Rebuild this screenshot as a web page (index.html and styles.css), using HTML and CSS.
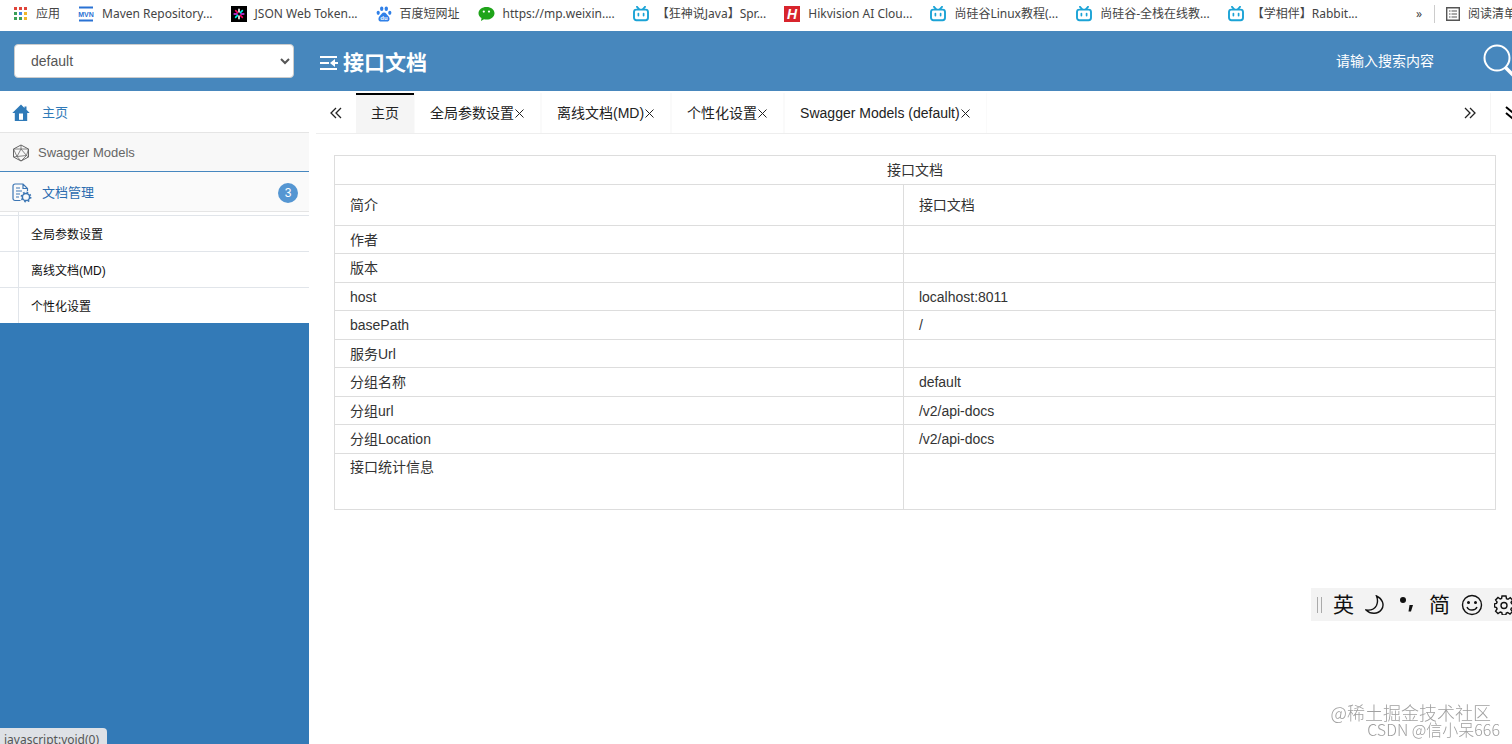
FILE: index.html
```html
<!DOCTYPE html>
<html lang="zh-CN">
<head>
    <meta charset="UTF-8">
    <meta name="viewport" content="width=device-width, initial-scale=1.0">
    <title>接口文档</title>
    <link rel="stylesheet" href="styles.css">
</head>
<body>
    <!-- 图标 -->
    <svg class="defs" width="0" height="0">
        <symbol id="tv" viewBox="0 0 16 16">
            <path d="M4 .8l2 2.4M12 .8l-2 2.4" fill="none" stroke="#1ba3d6" stroke-width="1.8" stroke-linecap="round"/>
            <rect x="1" y="3.6" width="14" height="10.6" rx="2.4" fill="#fff" stroke="#1ba3d6" stroke-width="1.9"/>
            <path d="M5.4 7.6v2M10.6 7.6v2" stroke="#1ba3d6" stroke-width="1.7" stroke-linecap="round"/>
        </symbol>
    </svg>

    <!-- 书签栏 -->
    <nav class="bookmarks">
        <a href="#">
            <svg width="15" height="16" viewBox="0 0 15 16">
                <path d="M1 1h3v3H1zM6 1h3v3H6zM11 1h3v3h-3z" fill="#e0443a"/>
                <path d="M1 6h3v3H1z" fill="#3a9f57"/>
                <path d="M6 6h3v3H6z" fill="#3f82ea"/>
                <path d="M11 6h3v3h-3z" fill="#f0b52b"/>
                <path d="M1 11h3v3H1zM6 11h3v3H6z" fill="#3a9f57"/>
                <path d="M11 11h3v3h-3z" fill="#f0b52b"/>
            </svg>
            <span>应用</span>
        </a>
        <a href="#">
            <svg width="16" height="16" viewBox="0 0 16 16">
                <path d="M1 1.5h14M1 14.5h14" stroke="#2a72d4" stroke-width="1.8"/>
                <text class="logo-mvn" x="8" y="11" text-anchor="middle">MVN</text>
            </svg>
            <span>Maven Repository...</span>
        </a>
        <a href="#">
            <svg width="16" height="16" viewBox="0 0 16 16" stroke-width="1.6" stroke-linecap="round">
                <path d="M0 0h16v16H0z" fill="#000"/>
                <path d="M8 6V3.200M8 10v2.800" stroke="#fff"/>
                <path d="M10 8h2.800M6 8H3.200" stroke="#d63aff"/>
                <path d="M9.400 6.600l2-2M6.600 9.400l-2 2" stroke="#00f2e6"/>
                <path d="M6.600 6.600l-2-2M9.400 9.400l2 2" stroke="#fb015b"/>
            </svg>
            <span>JSON Web Token...</span>
        </a>
        <a href="#">
            <svg width="16" height="16" viewBox="0 0 16 16" fill="#3080e8">
                <ellipse cx="5.700" cy="2.700" rx="1.700" ry="2.300"/>
                <ellipse cx="10.300" cy="2.700" rx="1.700" ry="2.300"/>
                <ellipse cx="2.200" cy="6.800" rx="1.600" ry="2.100"/>
                <ellipse cx="13.800" cy="6.800" rx="1.600" ry="2.100"/>
                <path d="M8 6.400c2.200 0 2.500 2 4.200 3.500 2.200 1.900 1.600 5.700-1.200 5.700H5c-2.800 0-3.400-3.800-1.200-5.700C5.500 8.400 5.800 6.400 8 6.400z"/>
                <text class="logo-du" x="8" y="14" text-anchor="middle">du</text>
            </svg>
            <span>百度短网址</span>
        </a>
        <a href="#">
            <svg width="17" height="16" viewBox="0 0 17 16">
                <path d="M8.500 1C4 1 .5 3.700.5 7.200c0 2 1.200 3.700 3 4.900L3 15l3-1.700c.8.200 1.600.3 2.500.3 4.500 0 8-2.800 8-6.400S13 1 8.500 1z" fill="#1fa41a"/>
                <circle cx="5.800" cy="5.600" r="1.100" fill="#fff"/>
                <circle cx="11" cy="5.600" r="1.100" fill="#fff"/>
            </svg>
            <span>https://mp.weixin....</span>
        </a>
        <a href="#">
            <svg width="16" height="16"><use href="#tv"/></svg>
            <span>【狂神说Java】Spr...</span>
        </a>
        <a href="#">
            <svg width="16" height="16" viewBox="0 0 16 16">
                <path d="M0 0h16v16H0z" fill="#d8242c"/>
                <text class="logo-h" x="8" y="13" text-anchor="middle">H</text>
            </svg>
            <span>Hikvision AI Clou...</span>
        </a>
        <a href="#">
            <svg width="16" height="16"><use href="#tv"/></svg>
            <span>尚硅谷Linux教程(...</span>
        </a>
        <a href="#">
            <svg width="16" height="16"><use href="#tv"/></svg>
            <span>尚硅谷-全栈在线教...</span>
        </a>
        <a href="#">
            <svg width="16" height="16"><use href="#tv"/></svg>
            <span>【学相伴】Rabbit...</span>
        </a>
        <div class="bookmarks-end">
            <button type="button" class="more">»</button>
            <a href="#" class="reading">
                <svg width="14" height="14" viewBox="0 0 14 14" fill="none" stroke="#555">
                    <path d="M.7.7h12.600v12.600H.7z" stroke-width="1.400"/>
                    <path d="M3 4h1.500M3 7h1.500M3 10h1.500M5.500 4H11M5.500 7H11M5.500 10H11" stroke-width="1.200"/>
                </svg>
                <span>阅读清单</span>
            </a>
        </div>
    </nav>

    <!-- 头部 -->
    <header class="header">
        <div class="group">
            <select class="group-select" aria-label="分组">
                <option>default</option>
            </select>
        </div>
        <h1 class="title">
            <svg width="18" height="16" viewBox="0 0 18 16" fill="none" stroke="#fff" stroke-width="2">
                <path d="M0 2h17M0 8h9M0 14h17"/>
                <path d="M10 8l5-4v8z" fill="#fff" stroke="none"/>
                <path d="M14 8h4"/>
            </svg>
            接口文档
        </h1>
        <form class="search">
            <input type="text" placeholder="请输入搜索内容" aria-label="请输入搜索内容">
            <button type="button" aria-label="搜索">
                <svg width="29" height="34" viewBox="0 0 29 34" fill="none" stroke="#fff">
                    <circle cx="14" cy="14" r="12.500" stroke-width="2"/>
                    <path d="M22 23l10 10" stroke-width="3.500"/>
                </svg>
            </button>
        </form>
    </header>

    <div class="container">
        <!-- 左侧菜单 -->
        <aside class="sidebar">
            <ul class="menu">
                <li class="home">
                    <a href="#">
                        <svg width="18" height="18" viewBox="0 0 18 18" fill="#2f7ab8">
                            <path d="M9 .5L.3 9h2.500v8h12.400V9h2.500L14.500 5.800V2.500h-2v1.400z"/>
                            <path d="M7 9.500h4v6.300H7z" fill="#fff"/>
                        </svg>
                        <span>主页</span>
                    </a>
                </li>
                <li class="models">
                    <a href="#">
                        <svg width="18" height="18" viewBox="0 0 18 18" fill="none" stroke="#666">
                            <path d="M9 1l7.500 4v8L9 17l-7.500-4V5z"/>
                            <path d="M9 1v4L1.500 5 5 12.500l-3.500.5M9 5l7.500 0-2 6.500 2 1.500M9 17l-4-4.500 9.500-1L9 17M9 5l-4 7.500M9 5l5.500 6.500" stroke-width=".8"/>
                        </svg>
                        <span>Swagger Models</span>
                    </a>
                </li>
                <li class="docs">
                    <a href="#">
                        <svg width="20" height="20" viewBox="0 0 20 20" fill="none" stroke="#3c76b4" stroke-width="1.200">
                            <path d="M8.500 17.500H3a2 2 0 0 1-2-2V3a2 2 0 0 1 2-2h8l4.500 4.500V8M11 1v4.500h4.500"/>
                            <path d="M4 5h4M4 8h6M4 11h4M4 14h3"/>
                            <circle cx="14" cy="14" r="3.600" stroke-width="1.500"/>
                            <circle cx="14" cy="14" r="4.700" stroke-width="1.500" stroke-dasharray="1.700 1.990"/>
                        </svg>
                        <span>文档管理</span>
                        <span class="badge">3</span>
                    </a>
                    <ul class="submenu">
                        <li><a href="#">全局参数设置</a></li>
                        <li><a href="#">离线文档(MD)</a></li>
                        <li><a href="#">个性化设置</a></li>
                    </ul>
                </li>
            </ul>
        </aside>

        <main class="content">
            <!-- 选项卡 -->
            <div class="tabs">
                <button type="button" class="roll" aria-label="向左">
                    <svg width="12" height="12" viewBox="0 0 12 12"><path d="M6 1L1 6l5 5M11 1L6 6l5 5"/></svg>
                </button>
                <ul class="tab-list">
                    <li class="active"><a href="#">主页</a></li>
                    <li><a href="#">全局参数设置</a><button type="button" aria-label="关闭"><svg width="9" height="9" viewBox="0 0 9 9"><path d="M.5.5l8 8M8.500.5l-8 8"/></svg></button></li>
                    <li><a href="#">离线文档(MD)</a><button type="button" aria-label="关闭"><svg width="9" height="9" viewBox="0 0 9 9"><path d="M.5.5l8 8M8.500.5l-8 8"/></svg></button></li>
                    <li><a href="#">个性化设置</a><button type="button" aria-label="关闭"><svg width="9" height="9" viewBox="0 0 9 9"><path d="M.5.5l8 8M8.500.5l-8 8"/></svg></button></li>
                    <li><a href="#">Swagger Models (default)</a><button type="button" aria-label="关闭"><svg width="9" height="9" viewBox="0 0 9 9"><path d="M.5.5l8 8M8.500.5l-8 8"/></svg></button></li>
                </ul>
                <button type="button" class="roll" aria-label="向右">
                    <svg width="12" height="12" viewBox="0 0 12 12"><path d="M1 1l5 5-5 5M6 1l5 5-5 5"/></svg>
                </button>
                <button type="button" class="drop" aria-label="更多">
                    <svg width="8" height="14" viewBox="0 0 8 14"><path d="M1 1l6 5 6-5M1 7l6 5 6-5"/></svg>
                </button>
            </div>

            <table class="info">
                <colgroup>
                    <col class="key">
                    <col>
                </colgroup>
                <thead>
                    <tr><th colspan="2">接口文档</th></tr>
                </thead>
                <tbody>
                    <tr class="intro"><td>简介</td><td>接口文档</td></tr>
                    <tr><td>作者</td><td></td></tr>
                    <tr><td>版本</td><td></td></tr>
                    <tr><td>host</td><td>localhost:8011</td></tr>
                    <tr><td>basePath</td><td>/</td></tr>
                    <tr><td>服务Url</td><td></td></tr>
                    <tr><td>分组名称</td><td>default</td></tr>
                    <tr><td>分组url</td><td>/v2/api-docs</td></tr>
                    <tr><td>分组Location</td><td>/v2/api-docs</td></tr>
                    <tr class="count"><td>接口统计信息</td><td></td></tr>
                </tbody>
            </table>
        </main>
    </div>

    <!-- 输入法 -->
    <div class="ime">
        <i class="grip"></i>
        <span>英</span>
        <svg width="20" height="20" viewBox="0 0 20 20"><path d="M11.500 1c5.500 2.500 8.500 8.500 5 13.500-3.500 5-11 5-15.500.5 4.500.5 8.500-.5 10.500-4.500 1.500-3.300 1.200-6.500 0-9.500z"/></svg>
        <svg width="22" height="20" viewBox="0 0 22 20"><circle cx="7" cy="5" r="2.300" fill="#111"/><path d="M13.500 10h3.500l-2 6.500h-2.500z" fill="#111" stroke="none"/></svg>
        <span>简</span>
        <svg width="22" height="22" viewBox="0 0 22 22"><circle cx="11" cy="11" r="9.500"/><path d="M6 13c1.500 4 8.500 4 10 0"/><circle cx="7.500" cy="8.500" r=".8" fill="#111"/><circle cx="14.500" cy="8.500" r=".8" fill="#111"/></svg>
        <svg width="20" height="20" viewBox="0 0 20 20"><path d="M8 1h4l.5 2.700 1.500.6 2.300-1.600 2.300 2.300L17 7.400l.6 1.300L20 9v3.500l-2.600.5-.6 1.400 1.600 2.300-2.400 2.300-2.300-1.500-1.400.6L11.800 20H8.300l-.5-2.400-1.500-.6L4 18.600l-2.400-2.400 1.500-2.200-.6-1.400L.5 12V8.800l2-.4.600-1.400L1.600 4.900 4 2.500l2.200 1.500 1.400-.6z"/><circle cx="10" cy="10.500" r="3"/></svg>
    </div>

    <div class="watermark">
        <p class="juejin">@稀土掘金技术社区</p>
        <p class="csdn">CSDN @信小呆666</p>
    </div>

    <div class="status">javascript:void(0)</div>
</body>
</html>
```
FILE: styles.css
```css
* {
	box-sizing: border-box;
}

body {
	margin: 0;
	height: 100vh;
	display: flex;
	flex-direction: column;
	overflow: hidden;
	font: 14px/20px "Liberation Sans", "Noto Sans CJK SC", sans-serif;
	color: #333;
	background-color: #fff;
}

ul, h1, p {
	margin: 0;
	padding: 0;
	list-style: none;
}

a {
	color: inherit;
	text-decoration: none;
}

button {
	padding: 0;
	border: 0;
	background: none;
	color: inherit;
	font: inherit;
}

svg {
	flex: none;
	display: block;
}

.defs {
	position: absolute;
}

/* 书签栏 */
.bookmarks {
	flex: none;
	display: flex;
	align-items: center;
	gap: 18px;
	height: 31px;
	padding: 0 0 4px 13px;
	font: 12px/18px "Noto Sans", "Noto Sans CJK SC", sans-serif;
	color: #444;
	white-space: nowrap;
}

.bookmarks a {
	flex: none;
	display: flex;
	align-items: center;
	gap: 8px;
}

.logo-mvn {
	font: bold 7px "Liberation Sans", sans-serif;
	fill: #2a72d4;
}

.logo-du {
	font: bold 6px "Liberation Sans", sans-serif;
	fill: #fff;
}

.logo-h {
	font: italic bold 14px "Liberation Sans", sans-serif;
	fill: #fff;
}

.bookmarks-end {
	display: flex;
	align-items: center;
	gap: 12px;
	width: 96px;
	margin-left: auto;
}

.reading {
	padding-left: 11px;
	border-left: 1px solid #ccc;
}

/* 头部 */
.header {
	flex: none;
	display: flex;
	align-items: center;
	height: 60px;
	background-color: #4787bd;
	color: #fff;
}

.group {
	width: 309px;
	padding: 0 15px 0 14px;
}

.group-select {
	width: 100%;
	height: 34px;
	padding: 0 4px 0 12px;
	border: 1px solid #ccc;
	border-radius: 4px;
	background-color: #fff;
	color: #555;
	font: inherit;
}

.title {
	display: flex;
	align-items: center;
	gap: 5px;
	margin-left: 11px;
	padding-top: 3px;
	font-size: 21px;
	line-height: 30px;
}

.search {
	display: flex;
	align-items: center;
	margin-left: auto;
}

.search input {
	width: 147px;
	padding: 0;
	border: 0;
	outline: 0;
	background: none;
	color: #fff;
	font: inherit;
}

.search input::placeholder {
	color: #fff;
}

.container {
	flex: 1;
	display: flex;
	min-height: 0;
}

/* 左侧菜单 */
.sidebar {
	flex: none;
	width: 309px;
	background-color: #337ab7;
}

.menu {
	background-color: #fff;
	font-size: 13px;
}

.menu > li > a {
	display: flex;
	align-items: center;
	height: 41px;
	padding: 2px 11px 0 12px;
	gap: 12px;
}

.home {
	border-bottom: 1px solid #e5e5e5;
	color: #2f7ab8;
}

.menu .models > a {
	height: 38px;
	gap: 8px;
	background-color: #f8f8f8;
	color: #666;
}

.menu .docs > a {
	gap: 10px;
	border-top: 1px solid #4687bf;
	border-bottom: 1px solid #e5e5e5;
	background-color: #fafafa;
	color: #2b6cb0;
}

.badge {
	width: 20px;
	height: 20px;
	margin-left: auto;
	border-radius: 50%;
	background-color: #5596d2;
	color: #fff;
	font-size: 12px;
	text-align: center;
}

.submenu {
	padding-top: 3px;
	background: linear-gradient(#e1e5ea, #e1e5ea) 18px 0 / 1px 100% no-repeat;
	font-size: 12px;
	color: #111;
}

.submenu li {
	height: 36px;
	padding: 9px 0 0 31px;
	border-top: 1px solid #e1e5ea;
}

/* 选项卡 */
.content {
	flex: 1;
	min-width: 0;
	padding-left: 7px;
}

.tabs {
	display: flex;
	height: 43px;
	padding-top: 2px;
	border-bottom: 1px solid #eee;
	color: #222;
}

.tabs svg {
	fill: none;
	stroke: #222;
}

.roll {
	display: flex;
	align-items: center;
	justify-content: center;
	width: 40px;
}

.roll svg {
	stroke-width: 1.3;
}

.tab-list {
	flex: 1;
	display: flex;
}

.tab-list li {
	display: flex;
	align-items: center;
	padding: 0 15px;
	border: 1px solid #fafafa;
	border-width: 0 1px;
}

.tab-list button {
	padding: 0 1px;
}

.tab-list .active {
	padding-bottom: 2px;
	border-width: 2px 0 0;
	border-color: #000;
	background-color: #f5f5f5;
}

.drop {
	width: 22px;
	padding-left: 14px;
	border-left: 1px solid #f5f5f5;
}

.drop svg {
	stroke: #000;
	stroke-width: 2;
}

/* 文档信息 */
.info {
	width: calc(100% - 34px);
	margin: 21px 16px 0 18px;
	border-collapse: collapse;
	table-layout: fixed;
}

.info .key {
	width: 49%;
}

.info th, .info td {
	padding: 0 15px;
	border: 1px solid #ddd;
	font-weight: normal;
	text-align: left;
}

.info th {
	text-align: center;
}

.info tr {
	height: 29px;
}

.info tbody tr:nth-child(even) {
	height: 28px;
}

.info tbody tr.intro {
	height: 41px;
}

.info tbody tr.count:last-child {
	height: 56px;
}

.info .count td {
	padding-top: 3px;
	vertical-align: top;
}

/* 输入法 */
.ime {
	position: fixed;
	top: 588px;
	right: 0;
	display: flex;
	align-items: center;
	gap: 11px;
	width: 201px;
	height: 33px;
	padding-left: 6px;
	overflow: hidden;
	background-color: #f3f3f3;
	color: #111;
	font-size: 21px;
}

.ime svg {
	fill: none;
	stroke: #111;
	stroke-width: 1.4;
}

.grip {
	flex: none;
	width: 5px;
	height: 16px;
	border: 1px solid #aaa;
	border-width: 0 1px;
}

.watermark {
	position: fixed;
	right: 12px;
	bottom: 7px;
	color: #a0a0a0;
	font-family: "Noto Sans CJK SC", sans-serif;
	font-weight: 300;
	text-align: right;
}

.juejin {
	padding-right: 9px;
	font-size: 18px;
	line-height: 18px;
}

.csdn {
	font-size: 16px;
	line-height: 16px;
}

.status {
	position: fixed;
	left: 0;
	bottom: -7px;
	height: 23px;
	padding: 0 8px 0 4px;
	border-radius: 0 4px 0 0;
	background-color: #dee1e6;
	color: #555;
	font: 12px/23px "Noto Sans", sans-serif;
}
```
